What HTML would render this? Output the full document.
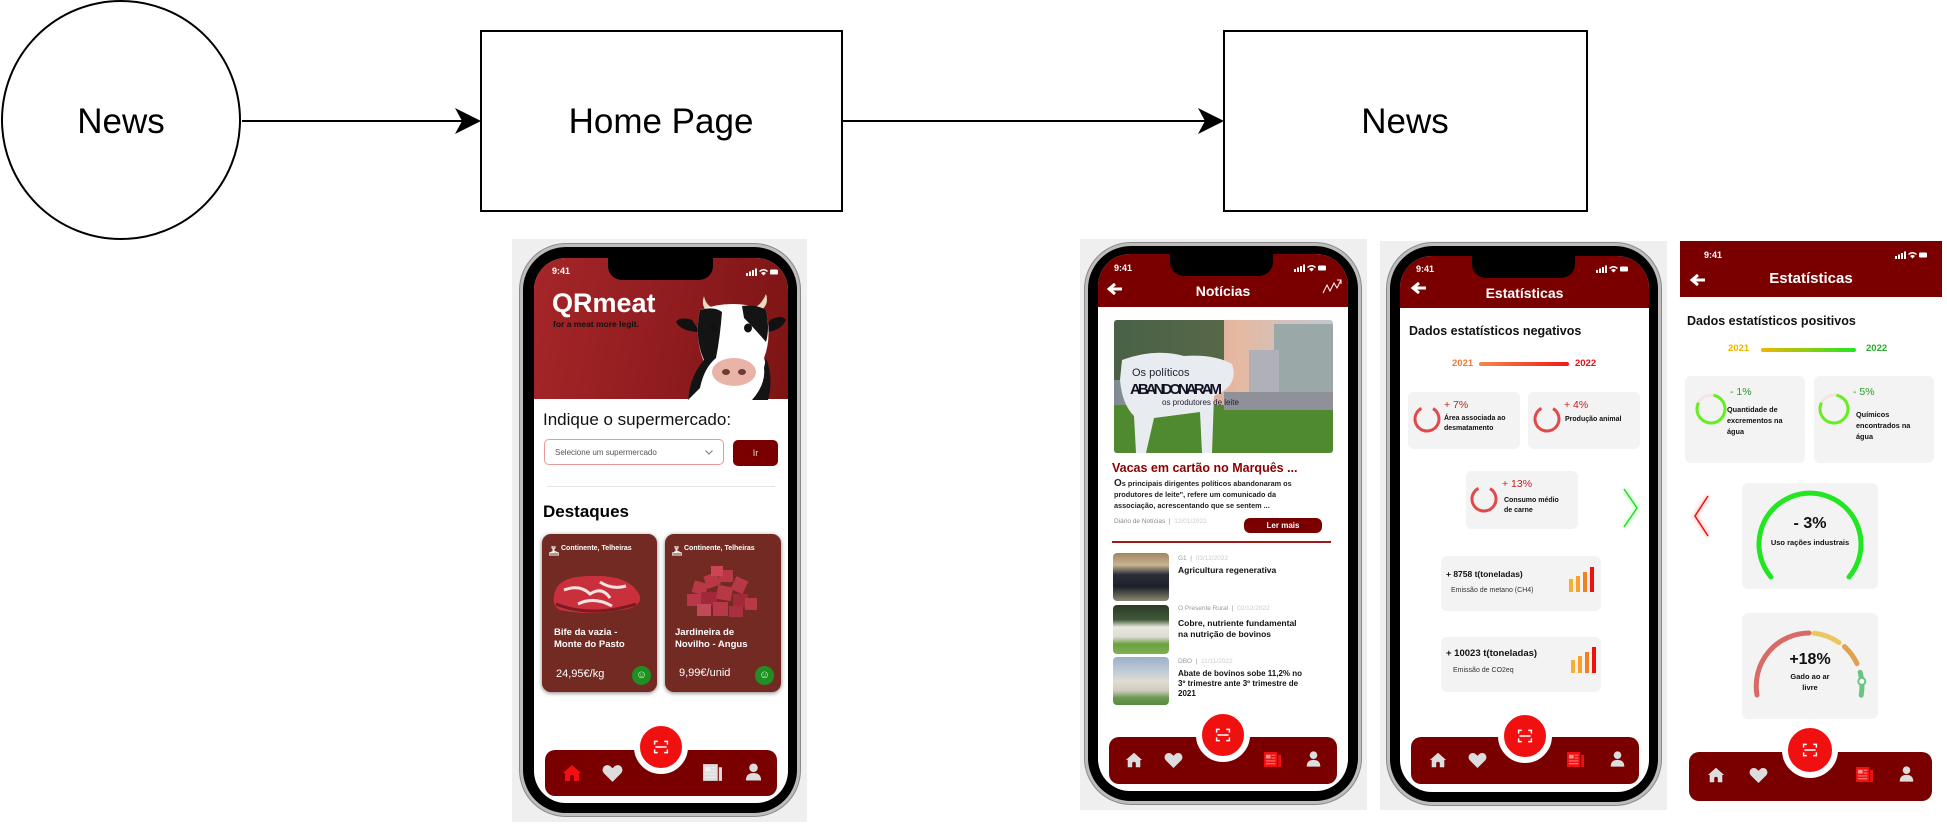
<!DOCTYPE html>
<html><head><meta charset="utf-8"><style>
*{margin:0;padding:0;box-sizing:border-box}
body{width:1947px;height:825px;background:#fff;position:relative;overflow:hidden;font-family:"Liberation Sans",sans-serif;color:#000}
.a{position:absolute}
.bg{position:absolute;background:#efefef}
.frame{position:absolute;border-radius:46px;background:#000;border:3px solid #bdbdbd;box-shadow:0 0 0 1px #8a8a8a}
.scr{position:absolute;overflow:hidden;background:#fff;border-radius:32px}
.hdr{position:absolute;left:0;top:0;width:100%;background:#7a0000}
.notch{position:absolute;background:#000;border-radius:0 0 14px 14px;height:22px;top:0}
.t941{position:absolute;color:#fff;font-weight:bold;font-size:9px}
.stat{position:absolute;width:32px;height:8px}
.nav{position:absolute;background:#7a0000;border-radius:10px}
.qrc{position:absolute;border-radius:50%;background:#f01010;border:6px solid #fff}
.card{position:absolute;background:#f3f3f3;border-radius:6px}
.b{font-weight:bold}
</style></head><body>

<svg class="a" style="left:0;top:0" width="1947" height="240">
<ellipse cx="121" cy="120" rx="119" ry="119" fill="none" stroke="#000" stroke-width="2"/>
<line x1="242" y1="121" x2="470" y2="121" stroke="#000" stroke-width="2"/>
<polygon points="481,121 455,108 462,121 455,134" fill="#000"/>
<rect x="481" y="31" width="361" height="180" fill="none" stroke="#000" stroke-width="2"/>
<line x1="842" y1="121" x2="1213" y2="121" stroke="#000" stroke-width="2"/>
<polygon points="1224,121 1198,108 1205,121 1198,134" fill="#000"/>
<rect x="1224" y="31" width="363" height="180" fill="none" stroke="#000" stroke-width="2"/>
<text x="121" y="133" font-size="35" text-anchor="middle" font-family="Liberation Sans">News</text>
<text x="661" y="133" font-size="35" text-anchor="middle" font-family="Liberation Sans">Home Page</text>
<text x="1405" y="133" font-size="35" text-anchor="middle" font-family="Liberation Sans">News</text>
</svg>

<svg width="0" height="0" style="position:absolute">
<defs>
<symbol id="home" viewBox="0 0 20 20"><path d="M10 2 L19 10 L17 10 L17 18 L12 18 L12 13 Q10 11 8 13 L8 18 L3 18 L3 10 L1 10 Z"/></symbol>
<symbol id="heart" viewBox="0 0 20 18"><path d="M10 17 L2 9 C-1 6 1 1 5 1 C7.5 1 9 3 10 4 C11 3 12.5 1 15 1 C19 1 21 6 18 9 Z"/></symbol>
<symbol id="news" viewBox="0 0 20 18"><path d="M1 1 H15 V17 H1 Z M16 4 H19 V17 H16 Z"/><path d="M3 4 H8 V8 H3 Z M9 4 H13 V5 H9 Z M9 7 H13 V8 H9Z M3 10 H13 V11 H3Z M3 13 H13 V14 H3Z" fill="#fff" opacity=".55"/></symbol>
<symbol id="person" viewBox="0 0 20 20"><circle cx="10" cy="5.5" r="4.5"/><path d="M2 19 Q2 11 10 11 Q18 11 18 19 Z"/></symbol>
<symbol id="scan" viewBox="0 0 20 20"><path d="M2 7 V3 H6 M14 3 H18 V7 M18 13 V17 H14 M6 17 H2 V13 M3 10 H17" fill="none" stroke="#fff" stroke-width="1.8"/></symbol>
<symbol id="status" viewBox="0 0 32 8"><rect x="0" y="5" width="2" height="3"/><rect x="3" y="3.5" width="2" height="4.5"/><rect x="6" y="2" width="2" height="6"/><rect x="9" y="0.5" width="2" height="7.5"/><path d="M13 3 Q17.5 -1 22 3 L21 4 Q17.5 1 14 4Z M15 5 Q17.5 3 20 5 L17.5 7.5Z"/><rect x="24" y="1.5" width="8" height="5" rx="1.3"/></symbol>
</defs>
</svg>

<!-- PHONE 1 -->
<div class="bg" style="left:512px;top:239px;width:295px;height:583px"></div>
<div class="frame" style="left:520px;top:244px;width:280px;height:572px"></div>
<div class="scr" style="left:534px;top:258px;width:254px;height:545px">
  <div class="hdr" style="height:141px;background:linear-gradient(100deg,#a52628,#8d1b1e 60%,#7d1414)"></div>
  <div class="notch" style="left:74px;width:105px"></div>
  <div class="t941" style="left:18px;top:8px">9:41</div>
  <svg class="stat" style="left:212px;top:10px" fill="#fff"><use href="#status"/></svg>
  <div class="a b" style="left:18px;top:30px;font-size:27px;color:#fff">QRmeat</div>
  <div class="a b" style="left:19px;top:61px;font-size:8.5px;color:#111">for a meat more legit.</div>
  <svg class="a" style="left:140px;top:30px" width="112" height="112" viewBox="0 0 112 112">
    <path d="M30 8 Q26 20 36 24 L40 20 Q32 18 30 8Z M92 6 Q96 18 84 24 L80 20 Q88 16 92 6Z" fill="#e8dcc0"/>
    <path d="M18 32 Q6 28 2 34 Q8 44 26 44Z M96 32 Q108 26 112 32 Q106 44 90 44Z" fill="#111"/>
    <path d="M26 22 Q58 10 92 22 Q98 50 90 70 Q96 90 92 112 L14 112 Q16 90 30 74 Q20 50 26 22Z" fill="#fff"/>
    <path d="M26 22 Q40 18 48 24 Q46 50 42 70 Q30 80 26 100 L14 112 Q16 88 30 72 Q20 50 26 22Z" fill="#141414"/>
    <path d="M68 18 Q82 16 92 22 Q96 40 92 54 Q80 40 70 30Z" fill="#141414"/>
    <path d="M92 70 Q100 90 94 112 L78 112 Q92 96 90 80Z" fill="#141414"/>
    <ellipse cx="40" cy="40" rx="4" ry="4.5" fill="#111"/>
    <ellipse cx="74" cy="40" rx="4" ry="4.5" fill="#111"/>
    <ellipse cx="60" cy="84" rx="22" ry="14" fill="#e9b3a8"/>
    <ellipse cx="52" cy="84" rx="4" ry="3" fill="#6b3b35"/><ellipse cx="68" cy="84" rx="4" ry="3" fill="#6b3b35"/>
  </svg>
  <div class="a" style="left:9px;top:152px;font-size:17px;color:#111">Indique o supermercado:</div>
  <div class="a" style="left:10px;top:181px;width:180px;height:26px;border:1px solid #e69a9a;border-radius:5px;font-size:8px;color:#555;padding:8px 0 0 10px">Selecione um supermercado
    <svg class="a" style="left:160px;top:10px" width="8" height="5"><path d="M0.5 0.5 L4 4 L7.5 0.5" fill="none" stroke="#777" stroke-width="1"/></svg></div>
  <div class="a" style="left:199px;top:182px;width:45px;height:26px;background:#7a0000;border-radius:5px;color:#ddd;font-size:9px;text-align:center;line-height:26px">Ir</div>
  <div class="a" style="left:13px;top:228px;width:228px;height:1px;background:#e4e4e4"></div>
  <div class="a b" style="left:9px;top:244px;font-size:17px;color:#000">Destaques</div>
  <div class="a" style="left:8px;top:276px;width:115px;height:158px;background:#722a22;border-radius:9px;box-shadow:0 1px 4px rgba(0,0,0,.5)">
    <svg class="a" style="left:7px;top:12px" width="10" height="10"><path d="M3 0 h3 v2 h-1 v4 h-1 v-4 h-1z M0 7 h10 v2 h-10z M1 7 q4 -3 8 0" fill="none" stroke="#fff" stroke-width=".9"/></svg>
    <div class="a b" style="left:19px;top:11px;font-size:7px;color:#fff">Continente, Telheiras</div>
    <svg class="a" style="left:8px;top:36px" width="92" height="46"><path d="M4 26 Q6 6 40 6 Q80 4 90 26 Q92 38 70 40 Q40 46 10 40 Q2 36 4 26Z" fill="#c9303b"/><path d="M14 20 Q30 14 40 24 Q52 16 60 28 M28 34 Q44 26 62 36 M50 12 Q62 20 76 16" fill="none" stroke="#f4e2e2" stroke-width="3"/><path d="M6 34 Q40 48 86 34" stroke="#7a1a22" stroke-width="3" fill="none"/></svg>
    <div class="a b" style="left:12px;top:93px;font-size:9.5px;line-height:11.5px;color:#fff">Bife da vazia -<br>Monte do Pasto</div>
    <div class="a" style="left:14px;top:134px;font-size:11px;color:#fff">24,95€/kg</div>
    <div class="a" style="left:90px;top:132px;width:19px;height:19px;border-radius:50%;background:#1f8f23;color:#cfc;font-size:11px;text-align:center;line-height:19px">☺</div>
  </div>
  <div class="a" style="left:131px;top:276px;width:116px;height:158px;background:#722a22;border-radius:9px;box-shadow:0 1px 4px rgba(0,0,0,.5)">
    <svg class="a" style="left:7px;top:12px" width="10" height="10"><path d="M3 0 h3 v2 h-1 v4 h-1 v-4 h-1z M0 7 h10 v2 h-10z M1 7 q4 -3 8 0" fill="none" stroke="#fff" stroke-width=".9"/></svg>
    <div class="a b" style="left:19px;top:11px;font-size:7px;color:#fff">Continente, Telheiras</div>
    <svg class="a" style="left:18px;top:28px" width="80" height="58"><g fill="#b83848"><rect x="10" y="20" width="14" height="12" transform="rotate(15 17 26)"/><rect x="22" y="12" width="14" height="13" transform="rotate(-20 29 18)"/><rect x="36" y="8" width="14" height="12"/><rect x="50" y="16" width="13" height="14" transform="rotate(25 56 23)"/><rect x="4" y="32" width="14" height="12"/><rect x="18" y="30" width="16" height="14" fill="#a02838"/><rect x="34" y="24" width="15" height="14" transform="rotate(10 41 31)"/><rect x="50" y="32" width="15" height="13" fill="#9e2a3a"/><rect x="14" y="42" width="14" height="12" fill="#c04a58"/><rect x="30" y="40" width="15" height="14"/><rect x="46" y="44" width="14" height="11" fill="#a83040"/><rect x="62" y="36" width="12" height="12"/><rect x="28" y="4" width="12" height="10" fill="#cc4455"/></g></svg>
    <div class="a b" style="left:10px;top:93px;font-size:9.5px;line-height:11.5px;color:#fff">Jardineira de<br>Novilho - Angus</div>
    <div class="a" style="left:14px;top:133px;font-size:11px;color:#fff">9,99€/unid</div>
    <div class="a" style="left:90px;top:132px;width:19px;height:19px;border-radius:50%;background:#1f8f23;color:#cfc;font-size:11px;text-align:center;line-height:19px">☺</div>
  </div>
  <div class="nav" style="left:11px;top:492px;width:232px;height:46px"></div>
  <div class="qrc" style="left:100px;top:462px;width:54px;height:54px"></div>
  <svg class="a" style="left:119px;top:481px" width="16" height="16"><use href="#scan"/></svg>
  <svg class="a" style="left:28px;top:505px" width="20" height="20" fill="#f01010"><use href="#home"/></svg>
  <svg class="a" style="left:68px;top:506px" width="21" height="19" fill="#ddd"><use href="#heart"/></svg>
  <svg class="a" style="left:168px;top:505px" width="21" height="19" fill="#ddd"><use href="#news"/></svg>
  <svg class="a" style="left:210px;top:504px" width="19" height="20" fill="#ddd"><use href="#person"/></svg>
</div>

<!-- PHONE 2 -->
<div class="bg" style="left:1080px;top:239px;width:287px;height:571px"></div>
<div class="frame" style="left:1085px;top:243px;width:276px;height:561px"></div>
<div class="scr" style="left:1098px;top:254px;width:250px;height:537px">
  <div class="hdr" style="height:53px"></div>
  <div class="notch" style="left:72px;width:103px"></div>
  <div class="t941" style="left:16px;top:9px">9:41</div>
  <svg class="stat" style="left:196px;top:10px" fill="#fff"><use href="#status"/></svg>
  <svg class="a" style="left:9px;top:29px" width="16" height="12"><path d="M15 6 H4 M8 1 L2 6 L8 11" fill="none" stroke="#fff" stroke-width="3"/></svg>
  <div class="a b" style="left:0;width:250px;text-align:center;top:29px;font-size:14px;color:#fff">Notícias</div>
  <svg class="a" style="left:224px;top:24px" width="20" height="16"><path d="M1 15 L5 7 L8 13 L12 5 L15 10 L19 2 M15 2 H19 V6" fill="none" stroke="#fff" stroke-width="1"/></svg>
  <svg class="a" style="left:16px;top:66px;border-radius:3px" width="219" height="133" viewBox="0 0 219 133">
    <defs><linearGradient id="sky" x1="0" y1="0" x2="1" y2="0"><stop offset="0" stop-color="#7d8a90"/><stop offset=".55" stop-color="#e8b8a0"/><stop offset="1" stop-color="#c0c8d0"/></linearGradient></defs>
    <rect width="219" height="133" fill="url(#sky)"/>
    <rect x="0" y="0" width="110" height="60" fill="#3f5a3a" opacity=".85"/>
    <rect x="160" y="4" width="59" height="90" fill="#9aa8a8"/><rect x="135" y="30" width="30" height="62" fill="#b0b0b8"/>
    <rect x="0" y="85" width="219" height="48" fill="#4f8a30"/>
    <rect x="110" y="72" width="109" height="18" fill="#8f9098"/>
    <path d="M8 40 Q40 28 70 36 Q100 34 118 44 Q124 62 108 72 L100 76 L98 133 L88 133 L86 92 L40 98 L32 133 L22 133 L20 96 Q8 84 6 60Z" fill="#e8ecf0"/>
    <text x="18" y="56" font-size="11" font-family="Liberation Sans" fill="#223">Os políticos</text>
    <text x="16" y="74" font-size="15" font-weight="bold" font-family="Liberation Sans" fill="#112" textLength="92">ABANDONARAM</text>
    <text x="48" y="85" font-size="8" font-family="Liberation Sans" fill="#223">os produtores de leite</text>
  </svg>
  <div class="a b" style="left:14px;top:207px;font-size:12.5px;color:#8b0000">Vacas em cartão no Marquês ...</div>
  <div class="a b" style="left:16px;top:224px;font-size:7.3px;line-height:11px;color:#222;width:220px"><span style="font-size:10px">O</span>s principais dirigentes políticos abandonaram os<br>produtores de leite", refere um comunicado da<br>associação, acrescentando que se sentem ...</div>
  <div class="a" style="left:16px;top:264px;font-size:6.5px;color:#888">Diário de Notícias &nbsp;| &nbsp;<span style="color:#ccc">12/01/2022</span></div>
  <div class="a b" style="left:146px;top:264px;width:78px;height:15px;background:#7a0000;border-radius:6px;color:#fff;font-size:8px;text-align:center;line-height:15px">Ler mais</div>
  <div class="a" style="left:14px;top:287px;width:219px;height:2px;background:#a01818"></div>
  <div class="a" style="left:15px;top:299px;width:56px;height:48px;border-radius:4px;background:linear-gradient(180deg,#a08660 0%,#c8b490 25%,#2a2e3a 45%,#1c2028 70%,#8a8a70 100%)"></div>
  <div class="a" style="left:15px;top:351px;width:56px;height:49px;border-radius:4px;background:linear-gradient(180deg,#2a3a26 0%,#405a38 30%,#e8e8e0 45%,#dcdcd4 65%,#6aa040 80%,#80b050 100%)"></div>
  <div class="a" style="left:15px;top:403px;width:56px;height:48px;border-radius:4px;background:linear-gradient(180deg,#9cb0c8 0%,#c0ccd8 30%,#e0dcd0 50%,#d0ccc0 70%,#6a9a50 85%,#5a8a40 100%)"></div>
  <div class="a" style="left:80px;top:301px;font-size:6.5px;color:#999">G1 &nbsp;| &nbsp;<span style="color:#ccc">03/12/2022</span></div>
  <div class="a b" style="left:80px;top:311px;font-size:8.5px;color:#111">Agricultura regenerativa</div>
  <div class="a" style="left:80px;top:351px;font-size:6.5px;color:#999">O Presente Rural &nbsp;| &nbsp;<span style="color:#ccc">02/12/2022</span></div>
  <div class="a b" style="left:80px;top:364px;font-size:8.5px;line-height:10.5px;color:#111">Cobre, nutriente fundamental<br>na nutrição de bovinos</div>
  <div class="a" style="left:80px;top:404px;font-size:6.5px;color:#999">DBO &nbsp;| &nbsp;<span style="color:#ccc">11/11/2022</span></div>
  <div class="a b" style="left:80px;top:415px;font-size:8px;line-height:10px;color:#111">Abate de bovinos sobe 11,2% no<br>3º trimestre ante 3º trimestre de<br>2021</div>
  <div class="nav" style="left:11px;top:483px;width:228px;height:47px"></div>
  <div class="qrc" style="left:98px;top:454px;width:54px;height:54px"></div>
  <svg class="a" style="left:117px;top:473px" width="16" height="16"><use href="#scan"/></svg>
  <svg class="a" style="left:27px;top:497px" width="18" height="18" fill="#ddd"><use href="#home"/></svg>
  <svg class="a" style="left:66px;top:498px" width="19" height="17" fill="#ddd"><use href="#heart"/></svg>
  <svg class="a" style="left:165px;top:497px" width="19" height="17" fill="#f01010"><use href="#news"/></svg>
  <svg class="a" style="left:207px;top:496px" width="17" height="18" fill="#ddd"><use href="#person"/></svg>
</div>

<!-- PHONE 3 -->
<div class="bg" style="left:1380px;top:241px;width:287px;height:569px"></div>
<div class="frame" style="left:1387px;top:243px;width:274px;height:562px"></div>
<div class="scr" style="left:1400px;top:256px;width:249px;height:536px">
  <div class="hdr" style="height:52px"></div>
  <div class="notch" style="left:72px;width:103px"></div>
  <div class="t941" style="left:16px;top:8px">9:41</div>
  <svg class="stat" style="left:196px;top:9px" fill="#fff"><use href="#status"/></svg>
  <svg class="a" style="left:11px;top:26px" width="16" height="12"><path d="M15 6 H4 M8 1 L2 6 L8 11" fill="none" stroke="#fff" stroke-width="3"/></svg>
  <div class="a b" style="left:0;width:249px;text-align:center;top:29px;font-size:14px;color:#fff">Estatísticas</div>
  <div class="a b" style="left:9px;top:68px;font-size:12.5px;color:#111">Dados estatísticos negativos</div>
  <div class="a b" style="left:52px;top:102px;font-size:9.5px;color:#f07a3a">2021</div>
  <div class="a" style="left:79px;top:106px;width:90px;height:4px;border-radius:2px;background:linear-gradient(90deg,#f4884a,#f01818)"></div>
  <div class="a b" style="left:175px;top:102px;font-size:9.5px;color:#e01010">2022</div>
  <div class="card" style="left:8px;top:136px;width:112px;height:57px">
    <svg class="a" style="left:3px;top:11px" width="32" height="32"><circle cx="16" cy="16" r="12" fill="none" stroke="#e04a4a" stroke-width="3" stroke-dasharray="63 12" transform="rotate(-60 16 16)"/></svg>
    <div class="a" style="left:36px;top:7px;font-size:10.5px;color:#c02020">+ 7%</div>
    <div class="a b" style="left:36px;top:22px;font-size:7px;line-height:10px;color:#111">Área associada ao<br>desmatamento</div>
  </div>
  <div class="card" style="left:128px;top:136px;width:112px;height:57px">
    <svg class="a" style="left:3px;top:11px" width="32" height="32"><circle cx="16" cy="16" r="12" fill="none" stroke="#e04a4a" stroke-width="3" stroke-dasharray="63 12" transform="rotate(-60 16 16)"/></svg>
    <div class="a" style="left:36px;top:7px;font-size:10.5px;color:#c02020">+ 4%</div>
    <div class="a b" style="left:37px;top:24px;font-size:7px;color:#111">Produção animal</div>
  </div>
  <div class="card" style="left:66px;top:215px;width:112px;height:58px">
    <svg class="a" style="left:2px;top:12px" width="32" height="32"><circle cx="16" cy="16" r="12" fill="none" stroke="#e04a4a" stroke-width="3" stroke-dasharray="63 12" transform="rotate(-60 16 16)"/></svg>
    <div class="a" style="left:36px;top:7px;font-size:10.5px;color:#c02020">+ 13%</div>
    <div class="a b" style="left:38px;top:25px;font-size:7px;line-height:10px;color:#111">Consumo médio<br>de carne</div>
  </div>
  <svg class="a" style="left:221px;top:230px;filter:drop-shadow(0 0 2px #6f6)" width="20" height="44"><path d="M3 3 L16 22 L3 41" fill="none" stroke="#22dd22" stroke-width="1.5"/></svg>
  <div class="card" style="left:41px;top:300px;width:160px;height:55px">
    <div class="a b" style="left:5px;top:13px;font-size:8.5px;color:#111">+ 8758 t(toneladas)</div>
    <div class="a" style="left:10px;top:31px;font-size:7px;color:#333">Emissão de metano (CH4)</div>
    <div class="a" style="left:128px;top:23px;width:4px;height:13px;background:#f8b030"></div>
    <div class="a" style="left:135px;top:20px;width:4px;height:16px;background:#f8a028"></div>
    <div class="a" style="left:142px;top:16px;width:4px;height:20px;background:#f08020"></div>
    <div class="a" style="left:149px;top:11px;width:4px;height:25px;background:#f01010"></div>
  </div>
  <div class="card" style="left:41px;top:381px;width:160px;height:55px">
    <div class="a b" style="left:5px;top:11px;font-size:9.5px;color:#111">+ 10023 t(toneladas)</div>
    <div class="a" style="left:12px;top:30px;font-size:7px;color:#333">Emissão de CO2eq</div>
    <div class="a" style="left:130px;top:23px;width:4px;height:13px;background:#f8b030"></div>
    <div class="a" style="left:137px;top:19px;width:4px;height:17px;background:#f8a028"></div>
    <div class="a" style="left:144px;top:15px;width:4px;height:21px;background:#f08020"></div>
    <div class="a" style="left:151px;top:10px;width:4px;height:26px;background:#f01010"></div>
  </div>
  <div class="nav" style="left:11px;top:481px;width:228px;height:47px"></div>
  <div class="qrc" style="left:98px;top:453px;width:54px;height:54px"></div>
  <svg class="a" style="left:117px;top:472px" width="16" height="16"><use href="#scan"/></svg>
  <svg class="a" style="left:29px;top:495px" width="18" height="18" fill="#ddd"><use href="#home"/></svg>
  <svg class="a" style="left:68px;top:496px" width="19" height="17" fill="#ddd"><use href="#heart"/></svg>
  <svg class="a" style="left:166px;top:495px" width="19" height="17" fill="#f01010"><use href="#news"/></svg>
  <svg class="a" style="left:209px;top:494px" width="17" height="18" fill="#ddd"><use href="#person"/></svg>
</div>

<!-- PHONE 4 -->
<div class="a" style="left:1680px;top:241px;width:262px;height:570px;background:#fff;overflow:hidden">
  <div class="hdr" style="height:56px"></div>
  <div class="t941" style="left:24px;top:9px">9:41</div>
  <svg class="stat" style="left:215px;top:10px" fill="#fff"><use href="#status"/></svg>
  <svg class="a" style="left:10px;top:33px" width="16" height="12"><path d="M15 6 H4 M8 1 L2 6 L8 11" fill="none" stroke="#fff" stroke-width="3"/></svg>
  <div class="a b" style="left:0;width:262px;text-align:center;top:29px;font-size:15px;color:#fff">Estatísticas</div>
  <div class="a b" style="left:7px;top:73px;font-size:12.5px;color:#111">Dados estatísticos positivos</div>
  <div class="a b" style="left:48px;top:102px;font-size:9.5px;color:#f2b400">2021</div>
  <div class="a" style="left:81px;top:107px;width:95px;height:4px;border-radius:2px;background:linear-gradient(90deg,#f2b400,#22e622)"></div>
  <div class="a b" style="left:186px;top:102px;font-size:9.5px;color:#2aaa2a">2022</div>
  <div class="card" style="left:5px;top:135px;width:120px;height:87px">
    <svg class="a" style="left:9px;top:16px" width="34" height="34"><circle cx="17" cy="17" r="14" fill="none" stroke="#f4e4e4" stroke-width="3"/><circle cx="17" cy="17" r="14" fill="none" stroke="#66ee22" stroke-width="3" stroke-dasharray="70 18" transform="rotate(-80 17 17)"/></svg>
    <div class="a" style="left:45px;top:10px;font-size:10.5px;color:#2a9a2a">- 1%</div>
    <div class="a b" style="left:42px;top:28px;font-size:7.3px;line-height:11px;color:#111">Quantidade de<br>excrementos na<br>água</div>
  </div>
  <div class="card" style="left:134px;top:135px;width:120px;height:87px">
    <svg class="a" style="left:3px;top:16px" width="34" height="34"><circle cx="17" cy="17" r="14" fill="none" stroke="#f4e4e4" stroke-width="3"/><circle cx="17" cy="17" r="14" fill="none" stroke="#66ee22" stroke-width="3" stroke-dasharray="70 18" transform="rotate(-80 17 17)"/></svg>
    <div class="a" style="left:39px;top:10px;font-size:10.5px;color:#2a9a2a">- 5%</div>
    <div class="a b" style="left:42px;top:33px;font-size:7.3px;line-height:11px;color:#111">Químicos<br>encontrados na<br>água</div>
  </div>
  <svg class="a" style="left:12px;top:252px;filter:drop-shadow(0 0 2px #f66)" width="20" height="46"><path d="M16 3 L3 23 L16 43" fill="none" stroke="#ee1111" stroke-width="1.5"/></svg>
  <div class="card" style="left:62px;top:242px;width:136px;height:106px">
    <svg class="a" style="left:0;top:0" width="136" height="106"><path d="M29 94 A51 51 0 1 1 107 94" fill="none" stroke="#22e622" stroke-width="5" stroke-linecap="round"/></svg>
    <div class="a b" style="left:0;width:136px;text-align:center;top:32px;font-size:16px;color:#111">- 3%</div>
    <div class="a b" style="left:0;width:136px;text-align:center;top:55px;font-size:7.5px;color:#111">Uso rações industrais</div>
  </div>
  <div class="card" style="left:62px;top:372px;width:136px;height:106px">
    <svg class="a" style="left:0;top:0" width="136" height="106">
      <path d="M15 82 A53 53 0 0 1 67 20" fill="none" stroke="#d86a68" stroke-width="5" stroke-linecap="round"/>
      <path d="M72 20.2 A53 53 0 0 1 97 29.6" fill="none" stroke="#eac860" stroke-width="5" stroke-linecap="round"/>
      <path d="M102.5 33.6 A53 53 0 0 1 115 50.6" fill="none" stroke="#e0a050" stroke-width="5" stroke-linecap="round"/>
      <path d="M118.2 59.3 A53 53 0 0 1 119.2 82.2" fill="none" stroke="#6cc484" stroke-width="5" stroke-linecap="round"/>
      <circle cx="119.8" cy="68.4" r="3.5" fill="#fff" stroke="#6cc484" stroke-width="2"/>
    </svg>
    <div class="a b" style="left:0;width:136px;text-align:center;top:38px;font-size:16px;color:#111">+18%</div>
    <div class="a b" style="left:0;width:136px;text-align:center;top:58px;font-size:7.5px;line-height:11px;color:#111">Gado ao ar<br>livre</div>
  </div>
  <div class="nav" style="left:9px;top:511px;width:243px;height:49px"></div>
  <div class="qrc" style="left:102px;top:481px;width:56px;height:56px"></div>
  <svg class="a" style="left:122px;top:501px" width="16" height="16"><use href="#scan"/></svg>
  <svg class="a" style="left:27px;top:525px" width="18" height="18" fill="#ddd"><use href="#home"/></svg>
  <svg class="a" style="left:69px;top:526px" width="19" height="17" fill="#ddd"><use href="#heart"/></svg>
  <svg class="a" style="left:175px;top:525px" width="19" height="17" fill="#f01010"><use href="#news"/></svg>
  <svg class="a" style="left:218px;top:524px" width="17" height="18" fill="#ddd"><use href="#person"/></svg>
</div>

</body></html>
